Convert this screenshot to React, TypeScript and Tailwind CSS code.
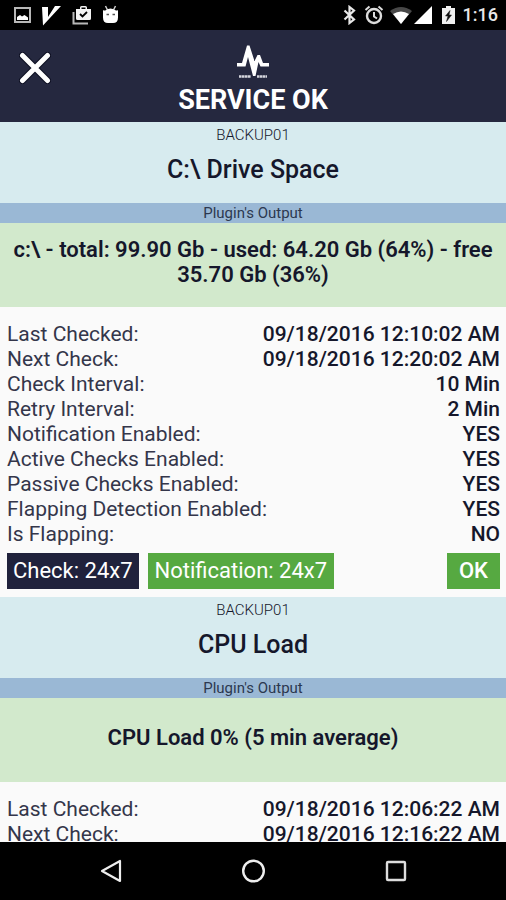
import React from "react";

type Detail = { label: string; value: string };

type Service = {
  host: string;
  name: string;
  output: string;
  details: Detail[];
  checkPeriod: string;
  notificationPeriod: string;
  state: string;
};

const flags: Detail[] = [
  { label: "Check Interval:", value: "10 Min" },
  { label: "Retry Interval:", value: "2 Min" },
  { label: "Notification Enabled:", value: "YES" },
  { label: "Active Checks Enabled:", value: "YES" },
  { label: "Passive Checks Enabled:", value: "YES" },
  { label: "Flapping Detection Enabled:", value: "YES" },
  { label: "Is Flapping:", value: "NO" },
];

const services: Service[] = [
  {
    host: "BACKUP01",
    name: "C:\\ Drive Space",
    output: "c:\\ - total: 99.90 Gb - used: 64.20 Gb (64%) - free 35.70 Gb (36%)",
    details: [
      { label: "Last Checked:", value: "09/18/2016 12:10:02 AM" },
      { label: "Next Check:", value: "09/18/2016 12:20:02 AM" },
      ...flags,
    ],
    checkPeriod: "24x7",
    notificationPeriod: "24x7",
    state: "OK",
  },
  {
    host: "BACKUP01",
    name: "CPU Load",
    output: "CPU Load 0% (5 min average)",
    details: [
      { label: "Last Checked:", value: "09/18/2016 12:06:22 AM" },
      { label: "Next Check:", value: "09/18/2016 12:16:22 AM" },
      ...flags,
    ],
    checkPeriod: "24x7",
    notificationPeriod: "24x7",
    state: "OK",
  },
];

function StatusBar() {
  return (
    <div className="flex h-[30px] shrink-0 items-center justify-between bg-black pr-2 pl-3.5 text-[#e8e8e8]">
      <div className="flex items-center gap-2.5">
        <svg width="17" height="18" viewBox="0 0 17 18" aria-hidden="true">
          <rect x="1" y="2" width="15" height="14" fill="none" stroke="#b8b8b8" strokeWidth="2" />
          <path d="M3 14v-3l3-2 2 1.5L10.500 9 14 11.500V14z" fill="#fff" />
        </svg>
        <svg width="21" height="21" viewBox="0 0 21 21" aria-hidden="true">
          <path d="M1 2h6v10L14 1h6L2 20.500z" fill="#fff" />
        </svg>
        <svg width="20" height="20" viewBox="0 0 20 20" aria-hidden="true">
          <path d="M1.500 7v11.500H16" fill="none" stroke="#b8b8b8" strokeWidth="2" />
          <path d="M4 4h4V2.500Q8 1 9.500 1h4Q15 1 15 2.500V4h4v9.500q0 1.500-1.500 1.500h-12Q4 15 4 13.500zM9.500 4h4V2.500h-4z" fill="#f4f4f4" fillRule="evenodd" />
          <path d="M8 9l2.500 2.500L15 7" fill="none" stroke="#000" strokeWidth="1.800" />
        </svg>
        <svg width="20" height="20" viewBox="0 0 20 20" aria-hidden="true">
          <path d="M3.500 1l2 4M13.500 1l-2 4" stroke="#ccc" strokeWidth="1.500" />
          <path d="M1 5q1.500 1 3 0 4.500-3 9 0 2 1 3 0v7.500q0 5.500-5 5.500H6q-5 0-5-5.500z" fill="#fff" />
          <path d="M4.500 9.500H7M10.500 9.500H13" stroke="#555" strokeWidth="1.400" />
        </svg>
      </div>
      <div className="flex items-center">
        <svg width="13" height="20" viewBox="0 0 13 20" aria-hidden="true">
          <path d="M1.500 5.500l9.500 9L6.500 18V2L11 5.500l-9.500 9" fill="none" stroke="#e8e8e8" strokeWidth="2.200" />
        </svg>
        <svg className="ml-2" width="20" height="20" viewBox="0 0 20 20" aria-hidden="true">
          <circle cx="10" cy="11" r="7" fill="none" stroke="#ddd" strokeWidth="2.400" />
          <path d="M10 7v4.500l3 2M1.500 5L5.500 1.500M18.500 5l-4-3.500" fill="none" stroke="#ddd" strokeWidth="2" />
        </svg>
        <svg className="ml-1.5" width="22" height="20" viewBox="0 0 22 20" aria-hidden="true">
          <path d="M0 6q11-8 22 0L11 19z" fill="#484848" />
          <path d="M3 9q8-5 16 0l-8 10z" fill="#fff" />
        </svg>
        <svg className="ml-0.5" width="18" height="20" viewBox="0 0 18 20" aria-hidden="true">
          <path d="M0 19L18 1v18z" fill="#fff" />
        </svg>
        <svg className="ml-2.5" width="13" height="20" viewBox="0 0 13 20" aria-hidden="true">
          <path d="M0 3h4V1h5v2h4v16H0z" fill="#f0f0f0" />
          <path d="M8 5.500L3.500 11H6l-1.500 5.500L9.500 10H7z" fill="#111" stroke="#111" strokeWidth="0.500" />
        </svg>
        <span className="ml-2 text-[18px] leading-6 font-medium">1:16</span>
      </div>
    </div>
  );
}

function Header() {
  return (
    <header className="grid h-[92px] shrink-0 grid-cols-[1fr_auto_1fr] bg-[#25283f]">
      <div className="pt-[22px] pl-[19px]">
        <button type="button" aria-label="Close" className="block">
          <svg width="32" height="32" viewBox="0 0 32 32" aria-hidden="true">
            <path d="M3.500 3.500l25 25M28.500 3.500l-25 25" stroke="#0d0f22" strokeWidth="7" strokeLinecap="round" />
            <path d="M3.500 3.500l25 25M28.500 3.500l-25 25" stroke="#fff" strokeWidth="5" strokeLinecap="round" />
          </svg>
        </button>
      </div>
      <div className="flex flex-col items-center pt-[14px]">
        <svg width="32" height="35" viewBox="0 0 32 35" aria-hidden="true">
          <path d="M0 19h5l5-17.500h2.500L17.500 17l3-6h2.500l3 8h6v3.500h-8.500L21.500 18 18.500 32h-2.500L11 13 8.500 22.500H0z" fill="#fff" />
          <path d="M2 32.500h12M20 32.500h10" stroke="#d5d6de" strokeWidth="2.400" strokeDasharray="2.500 0.400" />
        </svg>
        <h1 className="mt-[5px] text-[27px] leading-8 font-bold text-white">SERVICE OK</h1>
      </div>
    </header>
  );
}

function ServiceCard({ service }: { service: Service }) {
  return (
    <article>
      <div className="h-[81px] bg-[#d7ebef] pt-1 text-center">
        <p className="text-[15px] leading-[18px] font-light">{service.host}</p>
        <h2 className="mt-3 text-[25px] leading-7 font-medium">{service.name}</h2>
      </div>
      <p className="bg-[#9ab8d5] text-center text-[15px] leading-5 text-[#2c3850]">Plugin's Output</p>
      <div className="flex min-h-[84px] items-center justify-center bg-[#d2e9cc] px-1 pb-1.5 text-center">
        <p className="text-[22px] leading-[25px] font-semibold">{service.output}</p>
      </div>
      <div className="pt-[15px] pr-1.5 pb-2 pl-[7px]">
        <dl className="text-[21px] leading-[25px]">
          {service.details.map((detail) => (
            <div key={detail.label} className="flex justify-between">
              <dt className="text-[#34364a]">{detail.label}</dt>
              <dd className="font-medium">{detail.value}</dd>
            </div>
          ))}
        </dl>
        <div className="mt-1.5 flex gap-[9px] text-[22px] leading-9 text-white">
          <button type="button" className="bg-[#20223c] px-1.5">Check: {service.checkPeriod}</button>
          <button type="button" className="bg-[#56a941] px-[7px]">Notification: {service.notificationPeriod}</button>
          <button type="button" className="ml-auto bg-[#56a941] px-3 font-medium">{service.state}</button>
        </div>
      </div>
    </article>
  );
}

function NavigationBar() {
  return (
    <nav className="flex h-[58px] shrink-0 items-center justify-center gap-[118px] bg-black">
      <button type="button" aria-label="Back">
        <svg width="24" height="24" viewBox="0 0 24 24" aria-hidden="true">
          <path d="M21 2v20L3 12z" fill="none" stroke="#eee" strokeWidth="2.200" strokeLinejoin="round" />
        </svg>
      </button>
      <button type="button" aria-label="Home">
        <svg width="24" height="24" viewBox="0 0 24 24" aria-hidden="true">
          <circle cx="12.500" cy="12" r="10.300" fill="none" stroke="#eee" strokeWidth="2.400" />
        </svg>
      </button>
      <button type="button" aria-label="Recent apps">
        <svg width="24" height="24" viewBox="0 0 24 24" aria-hidden="true">
          <rect x="4" y="3" width="18" height="18" rx="1" fill="none" stroke="#ddd" strokeWidth="2.400" />
        </svg>
      </button>
    </nav>
  );
}

export default function App() {
  return (
    <div className="flex h-screen flex-col bg-[#fafafa] font-['Roboto',sans-serif] text-[#15172b]">
      <StatusBar />
      <Header />
      <main className="min-h-0 flex-1 overflow-y-auto [scrollbar-width:none]">
        {services.map((service) => (
          <ServiceCard key={service.name} service={service} />
        ))}
      </main>
      <NavigationBar />
    </div>
  );
}
